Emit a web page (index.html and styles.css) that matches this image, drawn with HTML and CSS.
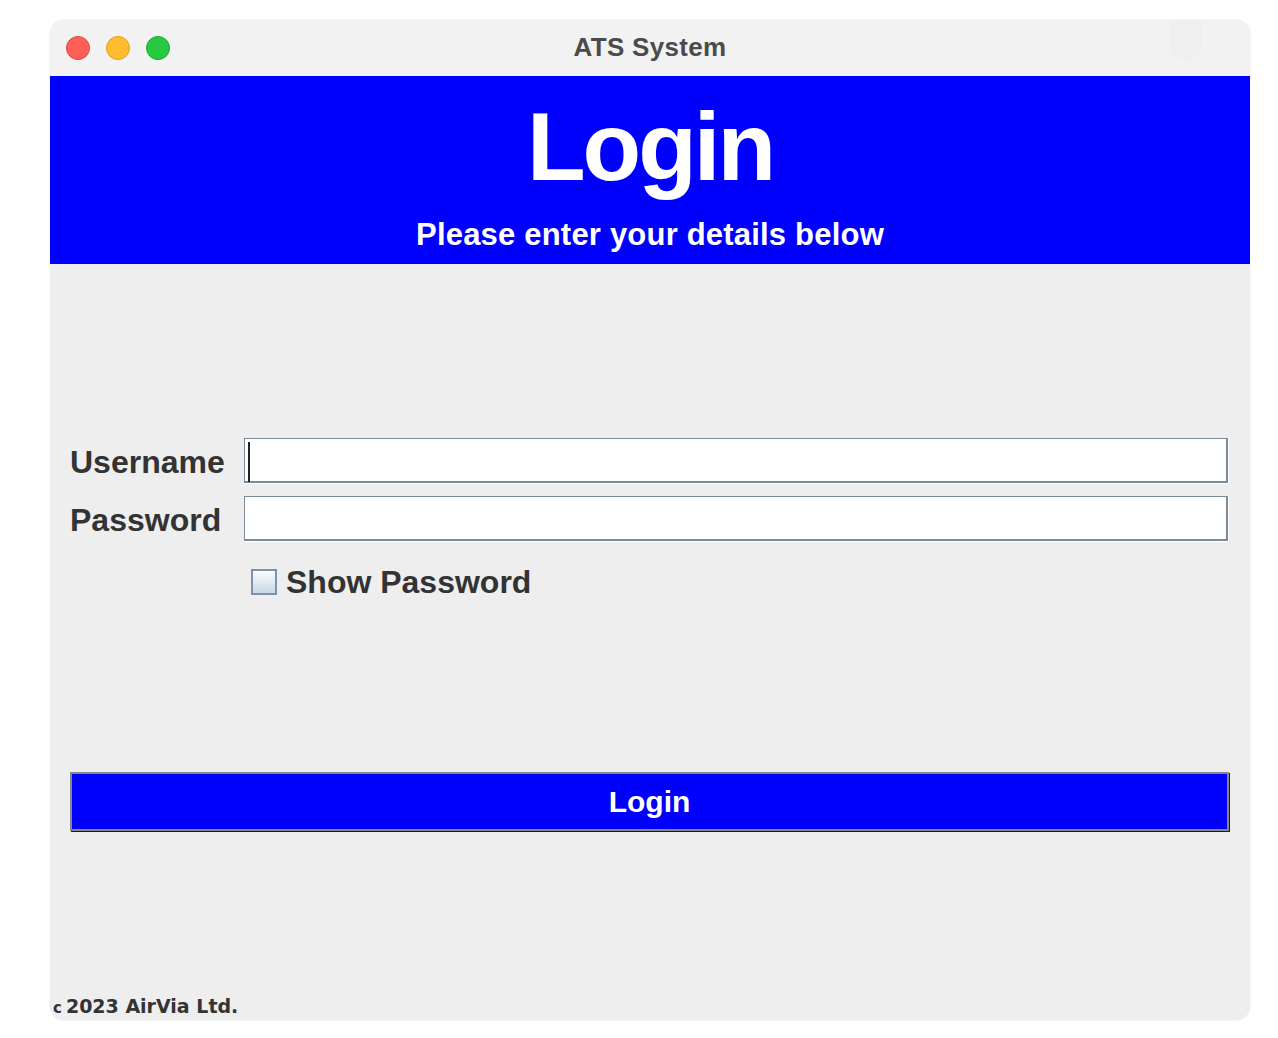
FILE: index.html
```html
<!DOCTYPE html>
<html lang="en">
<head>
  <meta charset="UTF-8">
  <meta name="viewport" content="width=device-width, initial-scale=1.0">
  <title>ATS System</title>
  <link rel="stylesheet" href="styles.css">
</head>
<body>
<div class="window">
  <div class="titlebar">
    <div class="lights">
      <span class="light red"></span>
      <span class="light yellow"></span>
      <span class="light green"></span>
    </div>
    <div class="title">ATS System</div>
    <span class="ghost"></span>
  </div>
  <div class="header">
    <h1>Login</h1>
    <p class="subtitle">Please enter your details below</p>
  </div>
  <div class="content">
    <div class="form">
      <label for="username">Username</label>
      <div class="field"><input type="text" id="username" name="username"><span class="caret"></span></div>
      <label for="password">Password</label>
      <div class="field"><input type="password" id="password" name="password"></div>
    </div>
    <label class="show-pw"><span class="checkbox"></span>Show Password</label>
    <button class="login-btn">Login</button>
    <div class="footer"><span class="copy">c</span>2023 AirVia Ltd.</div>
  </div>
</div>
</body>
</html>
```

FILE: styles.css
```css
* { margin: 0; padding: 0; box-sizing: border-box; }
body { background: #ffffff; padding: 20px 28px 18px 50px; font-family: "Liberation Sans", Arial, sans-serif; }
.window { width: 1200px; height: 1000px; background: #eeeeee; border-radius: 14px; overflow: hidden; display: flex; flex-direction: column; box-shadow: 0 0 0 1px rgba(0, 0, 0, 0.04); }
.titlebar { height: 56px; background: #f2f2f2; display: flex; align-items: center; position: relative; }
.lights { display: flex; gap: 16px; padding-left: 16px; }
.light { width: 24px; height: 24px; border-radius: 50%; display: block; }
.red { background: #fe5f57; border: 1px solid #e2463f; }
.yellow { background: #febc2e; border: 1px solid #e1a116; }
.green { background: #28c840; border: 1px solid #14ae2b; }
.title { position: absolute; left: 0; right: 0; top: 0; line-height: 54px; text-align: center; font-size: 26px; font-weight: bold; color: #4b4b4b; letter-spacing: 0.3px; }
.ghost { position: absolute; right: 48px; top: 0; width: 32px; height: 40px; background: #efefef; border-radius: 0 0 16px 16px; }
.header { height: 188px; background: #0000ff; color: #ffffff; text-align: center; padding-top: 16px; }
.header h1 { font-size: 96px; line-height: 110px; font-weight: bold; letter-spacing: -3px; }
.subtitle { font-size: 31px; font-weight: bold; line-height: 32px; margin-top: 17px; letter-spacing: 0.2px; }
.content { flex: 1; display: flex; flex-direction: column; padding: 0 21px 0 20px; }
.form { margin-top: 174px; display: grid; grid-template-columns: 174px 1fr; grid-auto-rows: 46px; row-gap: 12px; align-items: center; }
.form label { font-size: 32px; font-weight: bold; color: #333333; padding-top: 3px; }
.field { height: 46px; position: relative; border-right: 1px solid #ffffff; border-bottom: 1px solid #ffffff; }
.field input { width: 100%; height: 100%; background: #ffffff; border: 1px solid #7b8a99; border-right-width: 2px; border-bottom-width: 2px; outline: none; font-size: 24px; padding: 0 6px; }
.caret { position: absolute; left: 4px; top: 4px; width: 2px; height: 40px; background: #222222; }
.show-pw { margin-top: 27px; margin-left: 181px; display: flex; align-items: center; gap: 9px; font-size: 32px; font-weight: bold; color: #333333; height: 26px; }
.checkbox { width: 26px; height: 26px; border: 2px solid #7f93a8; background: linear-gradient(#fbfcfd, #c6d8e8); display: block; }
.login-btn { margin-top: 177px; width: 1159px; height: 59px; background: #0000ff; color: #ffffff; border: 2px solid #888888; box-shadow: 1px 1px 0 #0000dd; font-family: "Liberation Sans", Arial, sans-serif; font-size: 30px; font-weight: bold; }
.footer { margin-top: auto; margin-left: -17px; padding-bottom: 0; font-family: "DejaVu Sans", Verdana, sans-serif; font-size: 19px; font-weight: bold; color: #333333; line-height: 24px; }
.copy { font-size: 15px; margin-right: 4px; }
```
